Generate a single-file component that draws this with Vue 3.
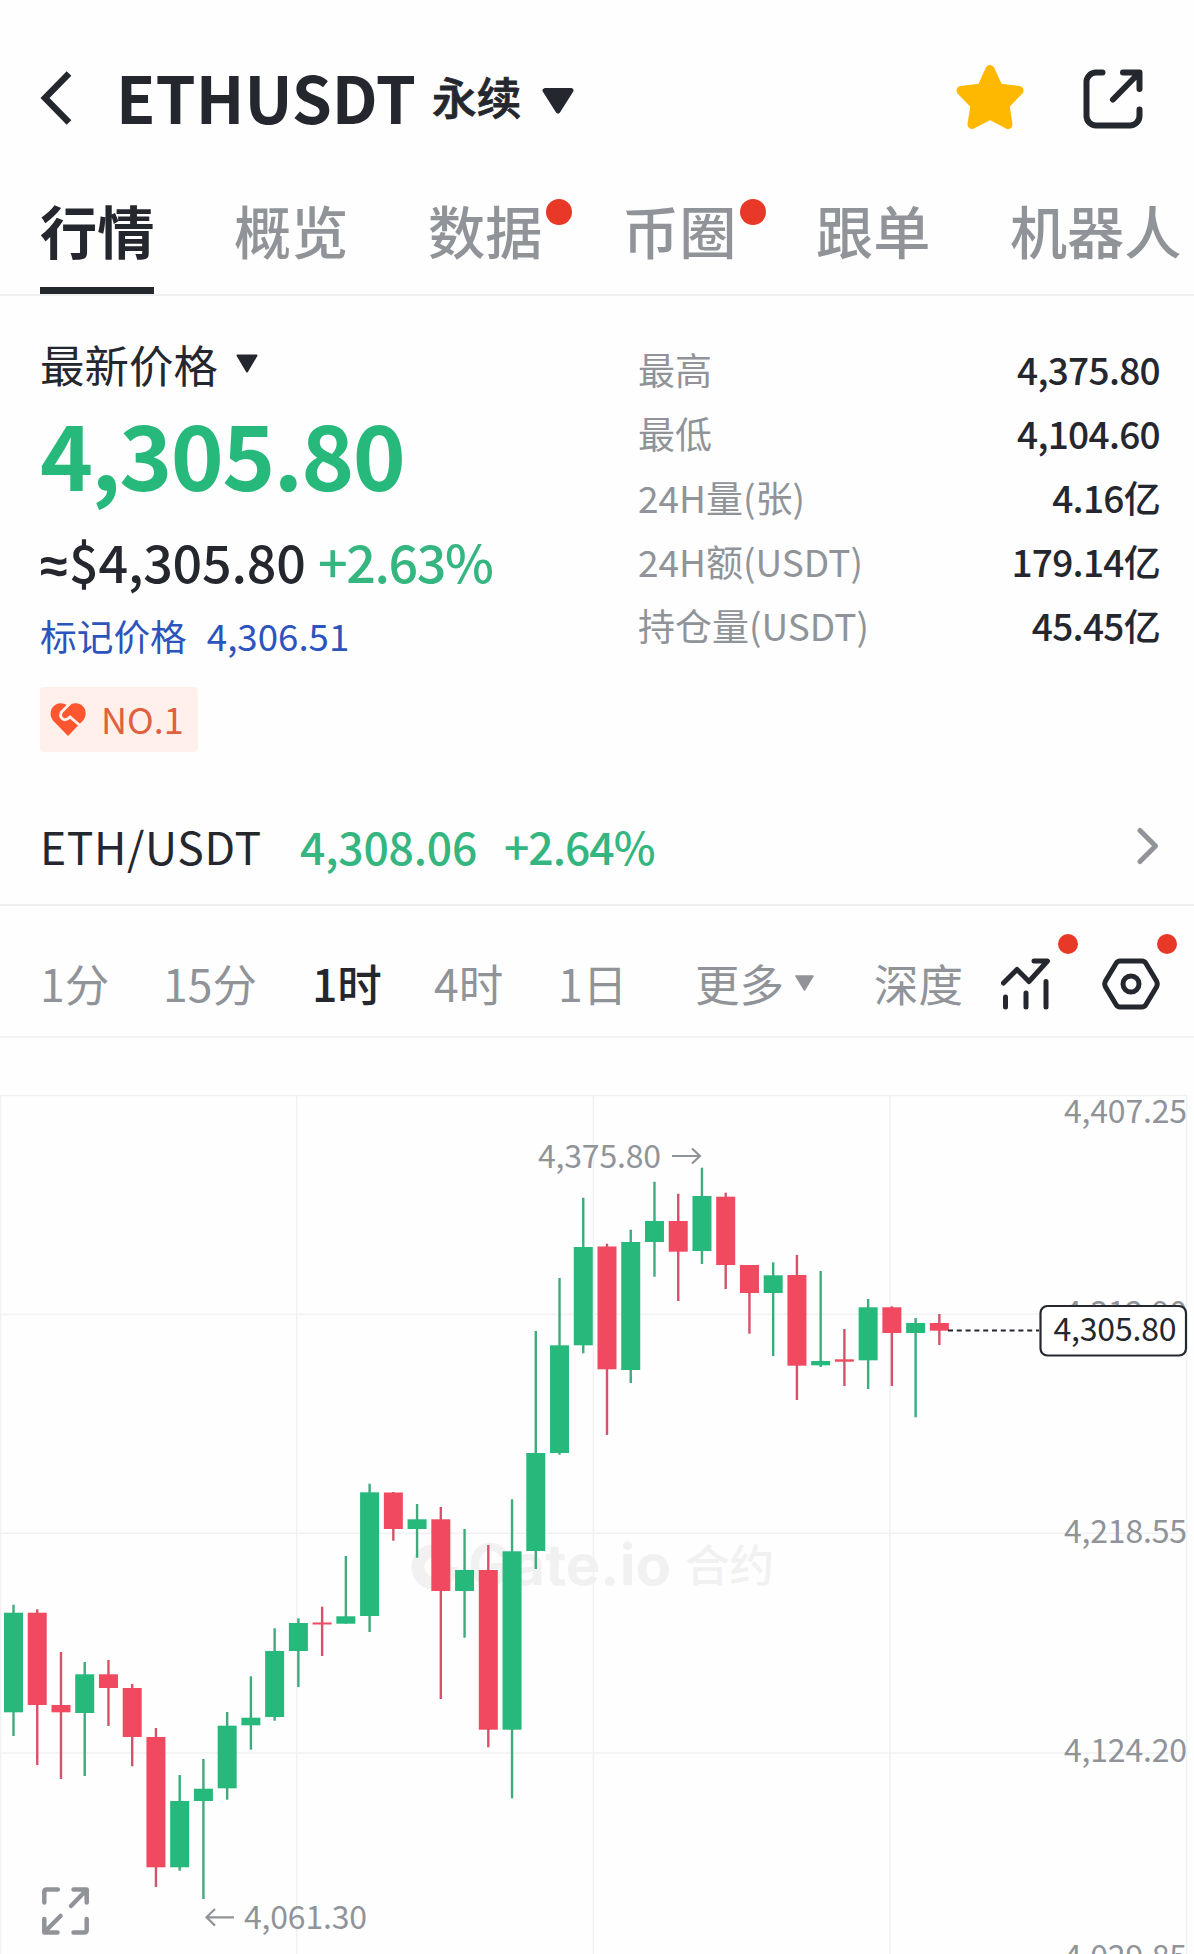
<script setup>
// Kopf-Tabs; dot = rotes Hinweis-Pünktchen
const tabs = [
  { name: '行情', active: true },
  { name: '概览' },
  { name: '数据', dot: true },
  { name: '币圈', dot: true },
  { name: '跟单' },
  { name: '机器人' },
]

const stats = [
  { label: '最高', value: '4,375.80' },
  { label: '最低', value: '4,104.60' },
  { label: '24H量(张)', value: '4.16亿' },
  { label: '24H额(USDT)', value: '179.14亿' },
  { label: '持仓量(USDT)', value: '45.45亿' },
]

const intervals = [
  { name: '1分', cls: 'i-1m' },
  { name: '15分', cls: 'i-15m' },
  { name: '1时', cls: 'i-1h active' },
  { name: '4时', cls: 'i-4h' },
  { name: '1日', cls: 'i-1d' },
]

// [steigend, Hoch, Körper oben, Körper unten, Tief] in Chart-Koordinaten
const raw = [
  [1, 1604.7, 1612.7, 1712.3, 1736],
  [0, 1609.3, 1612.7, 1705, 1765],
  [0, 1652, 1705, 1712.3, 1779],
  [1, 1662, 1674.3, 1713, 1776],
  [0, 1660, 1674.3, 1688, 1726],
  [0, 1684, 1688, 1737, 1766.3],
  [0, 1728, 1737, 1867.3, 1887],
  [1, 1775, 1801, 1867.3, 1870.7],
  [1, 1759, 1788.7, 1801, 1899],
  [1, 1712, 1725.7, 1788.3, 1799.7],
  [1, 1676.3, 1717.7, 1725.3, 1749.7],
  [1, 1628.3, 1651, 1717, 1720.7],
  [1, 1618.3, 1623, 1651, 1687],
  [0, 1606.7, 1622.5, 1624.5, 1656],
  [1, 1556, 1616.3, 1623.7, 1623.7],
  [1, 1483.7, 1492.3, 1616, 1632],
  [0, 1492, 1492.5, 1529, 1540.7],
  [1, 1504, 1519.3, 1529, 1557.7],
  [0, 1507, 1519.3, 1591, 1699],
  [1, 1529, 1570, 1591, 1637.7],
  [0, 1545, 1570, 1729.7, 1747.3],
  [1, 1499.3, 1551.3, 1729.7, 1798.3],
  [1, 1331, 1453, 1551, 1569],
  [1, 1278, 1345.3, 1453, 1454.7],
  [1, 1197.7, 1247, 1345.3, 1353.3],
  [0, 1243.7, 1246.5, 1369.3, 1435],
  [1, 1229.7, 1242, 1370, 1383],
  [1, 1181.7, 1221, 1242, 1276.7],
  [0, 1193.7, 1221, 1251.7, 1301],
  [1, 1167.7, 1196, 1251, 1264],
  [0, 1192.7, 1196.7, 1265, 1289],
  [0, 1265, 1265, 1293, 1333.7],
  [1, 1262.3, 1275.3, 1293, 1356],
  [0, 1255, 1275, 1365.7, 1400],
  [1, 1271, 1361, 1365.3, 1367],
  [0, 1329, 1359.3, 1361.7, 1386],
  [1, 1299, 1307.3, 1360.3, 1389],
  [0, 1306.3, 1307.3, 1333, 1386],
  [1, 1318, 1323, 1333, 1417.3],
  [0, 1314, 1323, 1330.7, 1345],
]

const candles = raw.map(([up, high, top, bottom, low], i) => ({
  x: 13.5 + i * 23.74,
  up: up === 1,
  high,
  top,
  bottom,
  low,
}))

const axis = [
  { text: '4,407.25', y: 1122.7 },
  { text: '4,312.90', y: 1323.7 },
  { text: '4,218.55', y: 1542.7 },
  { text: '4,124.20', y: 1761.7 },
  { text: '4,029.85', y: 1968 },
]
</script>

<template>
  <main class="page">
    <header class="header">
      <svg class="back" width="32" height="54" viewBox="0 0 32 54">
        <path d="M29 2.5 5 27l24 24.5" fill="none" stroke="#25272e" stroke-width="6.500" />
      </svg>
      <h1>ETHUSDT</h1>
      <span class="kind">永续</span>
      <svg class="caret" width="32" height="26" viewBox="0 0 32 26">
        <path d="M3 2.5h26L16 23z" fill="#25272e" stroke="#25272e" stroke-width="5" stroke-linejoin="round" />
      </svg>
      <svg class="star" width="68" height="66" viewBox="0 0 68 66">
        <path
          d="M34 5.500 42.500 24 63 26.500 49 41 52 60.500 34 51 16 60.500 19 41 5 26.500 25.500 24z"
          fill="#ffb800"
          stroke="#ffb800"
          stroke-width="9"
          stroke-linejoin="round"
        />
      </svg>
      <svg class="share" width="60" height="60" viewBox="0 0 60 60">
        <g fill="none" stroke="#25272e" stroke-width="6" stroke-linecap="round" stroke-linejoin="round">
          <path d="M19.500 3.500H13a9.500 9.500 0 0 0-9.500 9.500v34A9.500 9.500 0 0 0 13 56.500h34a9.500 9.500 0 0 0 9.500-9.500v-6.500" />
          <path d="M40 3.500h16.500V20M55 5 30 30.500" />
        </g>
      </svg>
    </header>

    <nav class="tabs">
      <div v-for="tab in tabs" :key="tab.name" class="tab" :class="{ active: tab.active }">
        {{ tab.name }}
        <i v-if="tab.dot" class="dot"></i>
      </div>
    </nav>

    <section class="summary">
      <div class="price-col">
        <div class="latest">
          最新价格
          <svg width="22" height="19" viewBox="0 0 22 19">
            <path d="M1.500 1.500h19L11 17.500z" fill="#25272e" stroke="#25272e" stroke-width="2" stroke-linejoin="round" />
          </svg>
        </div>
        <div class="price">4,305.80</div>
        <div class="fiat">
          <span class="usd"><span class="approx">≈</span>$4,305.80</span>
          <span class="change">+2.63%</span>
        </div>
        <div class="mark">
          <span>标记价格</span>
          <span class="mark-value">4,306.51</span>
        </div>
        <div class="badge">
          <svg width="36" height="34" viewBox="0 0 36 34">
            <path
              d="M18 33 3 17.500C-1 12.500 0 5 5.500 1.800 10-.8 15 .3 18 3.500 21-.3 27-1 31.500 2c5 3.500 5.500 10.500 1.500 15.500z"
              fill="#ff5630"
            />
            <path
              d="M20.500 0 11.500 9q-2.500 5 2 7.500 3 1 6.500-2.500l10 8.500"
              fill="none"
              stroke="#fff0eb"
              stroke-width="2.800"
            />
          </svg>
          <span>NO.1</span>
        </div>
      </div>

      <dl class="stats">
        <div v-for="item in stats" :key="item.label" class="stat">
          <dt>{{ item.label }}</dt>
          <dd>{{ item.value }}</dd>
        </div>
      </dl>
    </section>

    <section class="spot">
      <span class="pair">ETH/USDT</span>
      <span class="spot-price">4,308.06</span>
      <span class="spot-change">+2.64%</span>
      <svg class="chevron" width="22" height="38" viewBox="0 0 22 38">
        <path
          d="M3 3.500 18.500 19 3 34.500"
          fill="none"
          stroke="#909499"
          stroke-width="5"
          stroke-linecap="round"
          stroke-linejoin="round"
        />
      </svg>
    </section>

    <nav class="intervals">
      <span v-for="item in intervals" :key="item.name" :class="item.cls">{{ item.name }}</span>
      <span class="more">
        更多
        <svg width="19" height="16" viewBox="0 0 19 16">
          <path d="M1 1h17L9.500 15z" fill="#909499" stroke="#909499" stroke-width="1.500" stroke-linejoin="round" />
        </svg>
      </span>
      <span class="depth">深度</span>
      <div class="tool trend">
        <svg width="50" height="52" viewBox="0 0 50 52">
          <g fill="none" stroke="#25272e" stroke-width="5" stroke-linecap="round" stroke-linejoin="round">
            <path d="M2.500 25 16 11.500 28 23.500 46.500 3H33" />
            <path d="M4.500 39v10M25 35v14M45 23.500V49" />
          </g>
        </svg>
        <i class="dot"></i>
      </div>
      <div class="tool settings">
        <svg width="58" height="52" viewBox="0 0 58 52">
          <g fill="none" stroke="#25272e" stroke-width="5" stroke-linejoin="round">
            <path d="M18 3h22q2.500 0 4 2.500L54.500 23q1.500 3 0 6L44 46.500Q42.500 49 40 49H18q-2.500 0-4-2.500L3.500 29q-1.500-3 0-6L14 5.500Q15.500 3 18 3z" />
            <circle cx="29" cy="26" r="8" />
          </g>
        </svg>
        <i class="dot"></i>
      </div>
    </nav>

    <svg class="chart" width="1194" height="916" viewBox="0 1038 1194 916">
      <!-- Gitter -->
      <path
        d="M0 1095.500H1187M0 1314.300H1187M0 1533.300H1187M0 1753H1187M.5 1095.500V1954M296.700 1095.500V1954M593.400 1095.500V1954M890 1095.500V1954M1186.500 1095.500V1954"
        fill="none"
        stroke="#eff1f2"
        stroke-width="1.500"
      />

      <!-- Wasserzeichen -->
      <g class="watermark">
        <path d="M434.500 1550.500a16.500 16.500 0 1 0 16.500 16.500" fill="none" stroke="#f1f1f2" stroke-width="13" />
        <text x="468" y="1585" textLength="203" lengthAdjust="spacingAndGlyphs" class="brand">Gate.io</text>
        <text x="685" y="1582" textLength="89" class="brand-cn">合约</text>
      </g>

      <g v-for="(c, i) in candles" :key="i" :class="c.up ? 'up' : 'down'">
        <rect :x="c.x - 1.2" :y="c.high" width="2.400" :height="c.low - c.high" class="wick" />
        <rect :x="c.x - 9.5" :y="c.top" width="19" :height="c.bottom - c.top" />
      </g>

      <g class="axis">
        <text v-for="a in axis" :key="a.text" x="1064" :y="a.y" textLength="123">{{ a.text }}</text>
        <text x="538" y="1168" textLength="123">4,375.80</text>
        <text x="244" y="1929" textLength="123">4,061.30</text>
      </g>
      <g fill="none" stroke="#909499" stroke-width="2.200">
        <path d="M672 1156h28M692 1148.500l8 7.500-8 7.500" />
        <path d="M234 1917.300h-27M215 1909l-8.500 8.300 8.500 8.300" />
      </g>

      <!-- Aktueller Preis -->
      <path d="M948 1330.500H1039" stroke="#25272e" stroke-width="2.200" stroke-dasharray="5 3.800" />
      <rect x="1040.500" y="1306" width="145.500" height="49.500" rx="7" fill="#fff" stroke="#25272e" stroke-width="2.200" />
      <text x="1053.500" y="1341" textLength="123" class="current">4,305.80</text>

      <!-- Vollbild -->
      <g fill="none" stroke="#909499" stroke-width="4.500" stroke-linecap="round" stroke-linejoin="round">
        <path d="M44.300 1902.500V1892q0-2.500 2.500-2.500h11" />
        <path d="M73.500 1889.500h13.200v13M86 1890.500l-15 15.500" />
        <path d="M44.300 1919v13.500H57.500M45 1931.500l15.500-15.500" />
        <path d="M86.700 1919v11q0 2.500-2.500 2.500H73.500" />
      </g>
    </svg>
  </main>
</template>

<style>
body {
  margin: 0;
  background: #fefefe;
}
</style>

<style scoped>
.page {
  width: 1194px;
  height: 1954px;
  overflow: hidden;

  background: #fefefe;
  color: #25272e;

  font-family: 'Noto Sans CJK SC', sans-serif;
  white-space: nowrap;
}

.header {
  display: flex;
  align-items: center;
  box-sizing: border-box;
  height: 178px;
  padding: 18px 51px 0 40px;
}

.header h1 {
  width: 302px;
  margin: 0 0 4px 44px;

  font-size: 64.3px;
  font-weight: 700;
  line-height: 64px;
}

.kind {
  width: 90px;
  margin: 0 0 4px 14px;

  font-size: 44.7px;
  font-weight: 500;
  line-height: 60px;
  -webkit-text-stroke: 0.8px #25272e;
}

.caret {
  margin: 5px 0 0 20px;
}

.star {
  margin: 0 0 2px auto;
}

.share {
  margin: 1px 0 0 59px;
}

.tabs {
  display: flex;
  gap: 79.6px;
  box-sizing: border-box;
  height: 118px;
  padding-left: 40px;

  border-bottom: 2px solid #f0f0f1;
}

.tab {
  position: relative;
  flex-shrink: 0;
  height: 116px;

  color: #909499;
  font-size: 57.2px;
  font-weight: 500;
  line-height: 103px;
}

.tab.active {
  box-sizing: border-box;

  border-bottom: 7px solid #25272e;
  color: #25272e;
  font-weight: 700;
}

.dot {
  position: absolute;
  top: 21px;
  right: -30px;
  width: 26px;
  height: 26px;

  border-radius: 50%;
  background: #e73828;
}

.summary {
  display: flex;
  justify-content: space-between;
  box-sizing: border-box;
  height: 494px;
  padding: 40px 34px 0 40px;
}

.latest {
  display: flex;
  align-items: center;
  gap: 18px;
  height: 54px;

  font-size: 44.5px;
}

.price {
  height: 123px;

  color: #27b97c;
  font-size: 90px;
  font-weight: 700;
  letter-spacing: -1.6px;
  line-height: 124px;
}

.fiat {
  display: flex;
  height: 68px;
  margin-top: 14px;

  font-size: 52px;
  font-weight: 500;
  line-height: 68px;
}

.usd {
  width: 278px;
  letter-spacing: -0.2px;
}

/* Schmaleres Ungefähr-Zeichen als in der CJK-Schrift */
.approx {
  display: inline-block;
  width: 29px;

  font-family: 'Noto Sans', sans-serif;
  font-size: 50px;
  font-weight: 600;
}

.change {
  color: #35b57f;
  letter-spacing: -1.4px;
}

.mark {
  display: flex;
  height: 50px;
  margin-top: 15px;

  color: #2c54bd;
  font-size: 36.7px;
  line-height: 50px;
}

.mark-value {
  margin-left: 20px;
}

.badge {
  display: flex;
  align-items: center;
  gap: 15px;
  box-sizing: border-box;
  width: 158px;
  height: 65px;
  margin-top: 27px;
  padding-left: 10px;

  border-radius: 4px;
  background: #fff0eb;
  color: #e0603f;
  font-size: 36px;
}

.badge span {
  padding-bottom: 4px;
}

.stats {
  width: 522px;
  margin: 1px 0 0;
}

.stat {
  display: flex;
  justify-content: space-between;
  height: 64px;

  font-size: 37px;
  line-height: 64px;
}

.stat dt {
  color: #909499;
}

.stat dd {
  margin: 0;
  font-weight: 500;
  letter-spacing: -0.7px;
}

.spot {
  display: flex;
  align-items: center;
  box-sizing: border-box;
  height: 116px;
  padding: 0 35px 3px 40px;

  border-bottom: 2px solid #eeeeef;
  font-size: 44.5px;
}

.pair {
  width: 260px;
  letter-spacing: 0.6px;
}

.spot-price {
  width: 204px;
}

.spot-price,
.spot-change {
  color: #35b57f;
  font-weight: 500;
  letter-spacing: -0.2px;
}

.spot-change {
  letter-spacing: -1px;
}

.chevron {
  margin-left: auto;
}

.intervals {
  display: flex;
  align-items: center;
  box-sizing: border-box;
  height: 132px;
  padding: 26px 0 0 40px;

  border-bottom: 2px solid #f2f3f3;
  color: #909499;
  font-size: 44.5px;
}

.intervals > span {
  padding-bottom: 3px;
}

.i-1m {
  width: 123px;
}

.i-15m {
  width: 149px;
}

.i-1h {
  width: 122px;
}

.i-4h {
  width: 124px;
}

.i-1d {
  width: 137px;
}

.intervals .active {
  color: #25272e;
  font-weight: 500;
}

.more {
  display: flex;
  align-items: center;
  gap: 11px;
  width: 179px;
}

.depth {
  width: 127px;
}

.tool {
  position: relative;
  height: 52px;
}

.tool .dot {
  top: -24px;
  width: 20px;
  height: 20px;
}

.trend {
  width: 101px;
}

.trend .dot {
  right: 24px;
}

.settings .dot {
  right: -17px;
}

.chart {
  display: block;
}

.up {
  fill: #26b97b;
}

.down {
  fill: #f1495f;
}

.up .wick {
  fill: #3fab7c;
}

.down .wick {
  fill: #d6526a;
}

.axis {
  fill: #909499;
  font-size: 32px;
}

.current {
  fill: #25272e;
  font-size: 32px;
}

.watermark {
  fill: #f1f1f2;
  font-weight: 700;
}

.brand {
  font-family: Inter, sans-serif;
  font-size: 56px;
}

.brand-cn {
  font-size: 44.5px;
  font-weight: 500;
}
</style>
